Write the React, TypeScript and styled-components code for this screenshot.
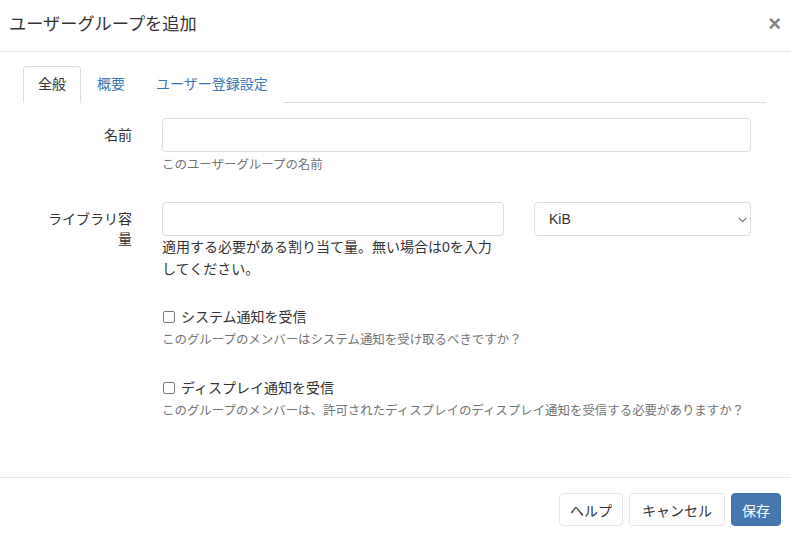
import React from "react";
import styled, { createGlobalStyle } from "styled-components";

const Global = createGlobalStyle`
  html, body { margin: 0; padding: 0; background: #fff; }
  body {
    font-family: "Liberation Sans", "Noto Sans CJK JP", sans-serif;
    color: #333;
    font-size: 14px;
  }
  * { box-sizing: border-box; }
`;

const Modal = styled.div`
  width: 791px;
  height: 536px;
  display: flex;
  flex-direction: column;
  background: #fff;
`;

const Header = styled.div`
  height: 52px;
  border-bottom: 1px solid #e5e5e5;
  display: flex;
  align-items: center;
  justify-content: space-between;
  padding: 0 10px 3px 9px;
`;

const Title = styled.h4`
  margin: 0;
  font-size: 17.2px;
  font-weight: 400;
  line-height: 22px;
  color: #333;
`;

const Close = styled.button`
  border: 0;
  background: transparent;
  padding: 0;
  font-family: "Liberation Sans", sans-serif;
  font-size: 22px;
  font-weight: 700;
  line-height: 1;
  color: #858585;
  cursor: pointer;
`;

const Body = styled.div`
  flex: 1;
  padding: 14px 25px 0 23px;
`;

const Tabs = styled.ul`
  list-style: none;
  margin: 0;
  padding: 0;
  display: flex;
  border-bottom: 1px solid #ddd;
`;

const Tab = styled.li<{ $active?: boolean }>`
  margin: 0 1px -1px 0;
  padding: 7px 14px 8px;
  line-height: 20px;
  font-size: 14px;
  border: 1px solid ${(p) => (p.$active ? "#ddd" : "transparent")};
  border-bottom-color: ${(p) => (p.$active ? "#fff" : "transparent")};
  border-radius: 4px 4px 0 0;
  background: #fff;
  color: ${(p) => (p.$active ? "#333" : "#3b76b5")};
  cursor: pointer;
`;

const TabContent = styled.div`
  padding-top: 15px;
`;

const FormGroup = styled.div<{ $cols?: string; $mb?: number }>`
  display: grid;
  grid-template-columns: ${(p) => p.$cols || "124px 1fr"};
  margin-bottom: ${(p) => (p.$mb ?? 28)}px;
`;

const Col = styled.div<{ $start?: number }>`
  padding: 0 15px;
  min-width: 0;
  ${(p) => (p.$start ? `grid-column-start: ${p.$start};` : "")}
`;

const Label = styled.label`
  display: block;
  padding: 7px 15px 0;
  text-align: right;
  line-height: 20px;
  font-size: 14px;
  color: #333;
`;

const TextInput = styled.input`
  display: block;
  width: 100%;
  height: 34px;
  border: 1px solid #ddd;
  border-radius: 4px;
  padding: 6px 12px;
  font: inherit;
  color: #333;
  outline: none;
`;

const SelectWrap = styled.div`
  position: relative;
`;

const Select = styled.select`
  display: block;
  width: 100%;
  height: 34px;
  border: 1px solid #ddd;
  border-radius: 4px;
  padding: 0 14px;
  font: inherit;
  font-size: 14px;
  color: #333;
  background: #fff;
  appearance: none;
  outline: none;
`;

const Chevron = styled.svg`
  position: absolute;
  right: 4px;
  top: 15px;
  pointer-events: none;
`;

const Help = styled.p`
  margin: 4px 0 0;
  font-size: 12.45px;
  line-height: 18px;
  color: #737373;
`;

const Note = styled.p`
  margin: 0;
  font-size: 14px;
  line-height: 22px;
  color: #333;
`;

const CheckLabel = styled.label`
  display: flex;
  align-items: center;
  line-height: 20px;
  font-size: 14px;
  color: #333;
`;

const Check = styled.input`
  appearance: none;
  width: 12px;
  height: 12px;
  margin: 0 6px 0 1px;
  border: 1px solid #7a7a7a;
  border-radius: 2px;
  background: #fff;
`;

const Footer = styled.div`
  border-top: 1px solid #e5e5e5;
  padding: 15px 10px 10px;
  display: flex;
  justify-content: flex-end;
  gap: 6px;
`;

const Button = styled.button<{ $primary?: boolean; $px?: number }>`
  height: 33px;
  padding: 0 ${(p) => p.$px ?? 10}px;
  border-radius: 4px;
  font-family: "Liberation Sans", "Noto Sans CJK JP", sans-serif;
  font-size: 14px;
  border: 1px solid ${(p) => (p.$primary ? "#3f6fa6" : "#e6e6e6")};
  background: ${(p) => (p.$primary ? "#4677af" : "#fff")};
  color: ${(p) => (p.$primary ? "#fff" : "#333")};
  cursor: pointer;
`;

export default function App() {
  return (
    <>
      <Global />
      <Modal>
        <Header>
          <Title>ユーザーグループを追加</Title>
          <Close aria-label="閉じる">×</Close>
        </Header>
        <Body>
          <Tabs>
            <Tab $active>全般</Tab>
            <Tab>概要</Tab>
            <Tab>ユーザー登録設定</Tab>
          </Tabs>
          <TabContent>
            <FormGroup>
              <Label>名前</Label>
              <Col>
                <TextInput type="text" />
                <Help>このユーザーグループの名前</Help>
              </Col>
            </FormGroup>
            <FormGroup $cols="124px 372px 1fr" $mb={27}>
              <Label>ライブラリ容量</Label>
              <Col>
                <TextInput type="text" />
                <Note>適用する必要がある割り当て量。無い場合は0を入力してください。</Note>
              </Col>
              <Col>
                <SelectWrap>
                  <Select defaultValue="KiB">
                    <option>KiB</option>
                    <option>MiB</option>
                    <option>GiB</option>
                  </Select>
                  <Chevron width="9" height="6" viewBox="0 0 9 6">
                    <path d="M0.8 1 L4.5 4.7 L8.2 1" fill="none" stroke="#777" strokeWidth="1.1" />
                  </Chevron>
                </SelectWrap>
              </Col>
            </FormGroup>
            <FormGroup $mb={29}>
              <Col $start={2}>
                <CheckLabel>
                  <Check type="checkbox" />
                  システム通知を受信
                </CheckLabel>
                <Help>このグループのメンバーはシステム通知を受け取るべきですか？</Help>
              </Col>
            </FormGroup>
            <FormGroup>
              <Col $start={2}>
                <CheckLabel>
                  <Check type="checkbox" />
                  ディスプレイ通知を受信
                </CheckLabel>
                <Help>このグループのメンバーは、許可されたディスプレイのディスプレイ通知を受信する必要がありますか？</Help>
              </Col>
            </FormGroup>
          </TabContent>
        </Body>
        <Footer>
          <Button>ヘルプ</Button>
          <Button $px={12}>キャンセル</Button>
          <Button $primary>保存</Button>
        </Footer>
      </Modal>
    </>
  );
}
